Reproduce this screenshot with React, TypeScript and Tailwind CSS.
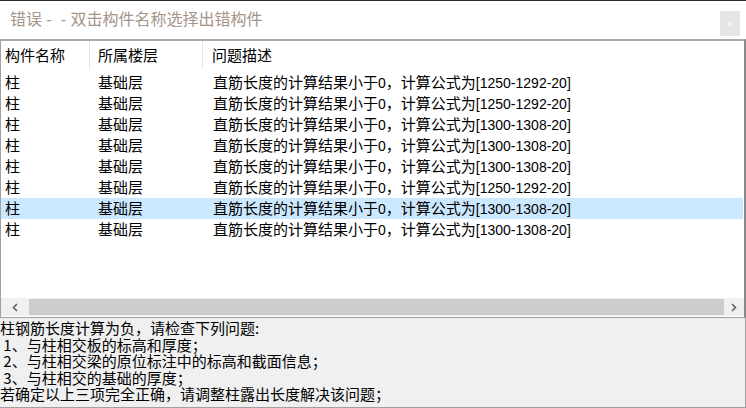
import React from "react";

const rows = [
  "[1250-1292-20]",
  "[1250-1292-20]",
  "[1300-1308-20]",
  "[1300-1308-20]",
  "[1300-1308-20]",
  "[1250-1292-20]",
  "[1300-1308-20]",
  "[1300-1308-20]",
];

const cjk = { fontFamily: '"Liberation Sans", "Noto Sans CJK SC", sans-serif' };

function Lat({ children }: { children: React.ReactNode }) {
  return <span className="text-[14px]">{children}</span>;
}

export default function App() {
  return (
    <div
      className="w-[746px] h-[408px] bg-white flex flex-col overflow-hidden text-black"
      style={cjk}
    >
      <div className="h-px bg-[#2b2b2b] shrink-0" />
      <div className="h-[38px] shrink-0 flex items-center justify-between pl-[10px] pr-[6px]">
        <span className="text-[16px] text-[#a59488] leading-none">错误 -&nbsp; - 双击构件名称选择出错构件</span>
        <div className="w-[20px] h-[25px] bg-[#e5e5e5] flex items-center justify-center text-[#f6f6f6] text-[15px] leading-none mt-[6px]">
          ×
        </div>
      </div>
      <div className="h-[279px] shrink-0 flex flex-col border-t-2 border-l border-r-2 border-t-[#a8a8ae] border-l-[#a0a0a0] border-r-[#8a8a8a] border-b border-b-[#a0a0a0]">
        <div className="h-[31px] shrink-0 flex text-[15px] leading-none">
          <div className="w-[89px] flex items-center pl-[4px] border-r border-[#e5e5e5] h-[28px]">构件名称</div>
          <div className="w-[113px] flex items-center pl-[8px] border-r border-[#e5e5e5] h-[28px]">所属楼层</div>
          <div className="flex-1 flex items-center pl-[9px] h-[28px]">问题描述</div>
        </div>
        <div className="flex-1 flex flex-col">
          {rows.map((f, i) => (
            <div
              key={i}
              className={
                "h-[21px] shrink-0 flex items-center text-[15px] leading-none mr-[1px] " +
                (i === 6 ? "bg-[#cce8ff]" : "")
              }
            >
              <div className="w-[89px] pl-[4px]">柱</div>
              <div className="w-[114px] pl-[8px]">基础层</div>
              <div className="flex-1 pl-[9px] whitespace-nowrap">
                直筋长度的计算结果小于<Lat>0</Lat>，计算公式为<Lat>{f}</Lat>
              </div>
            </div>
          ))}
        </div>
        <div className="h-[18px] shrink-0 flex items-center bg-[#f0f0f0] mb-[1px]">
          <div className="w-[28px] h-full flex items-center justify-center">
            <svg width="8" height="9" viewBox="0 0 8 9">
              <path d="M6 1 L2.5 4.5 L6 8" stroke="#606060" strokeWidth="1.6" fill="none" />
            </svg>
          </div>
          <div className="flex-1 h-[16px] bg-[#cdcdcd]" />
          <div className="w-[20px] h-full flex items-center justify-center">
            <svg width="8" height="9" viewBox="0 0 8 9">
              <path d="M2 1 L5.5 4.5 L2 8" stroke="#606060" strokeWidth="1.6" fill="none" />
            </svg>
          </div>
        </div>
      </div>
      <div
        className="flex-1 bg-[#f0f0f0] border-b border-r border-[#a0a0a0] pt-[2px] text-[15px] leading-[16.5px] whitespace-pre"
        style={{ fontFamily: '"Noto Sans CJK SC", sans-serif' }}
      >
        <div>柱钢筋长度计算为负，请检查下列问题:</div>
        <div> 1、与柱相交板的标高和厚度；</div>
        <div> 2、与柱相交梁的原位标注中的标高和截面信息；</div>
        <div> 3、与柱相交的基础的厚度；</div>
        <div>若确定以上三项完全正确，请调整柱露出长度解决该问题；</div>
      </div>
    </div>
  );
}
